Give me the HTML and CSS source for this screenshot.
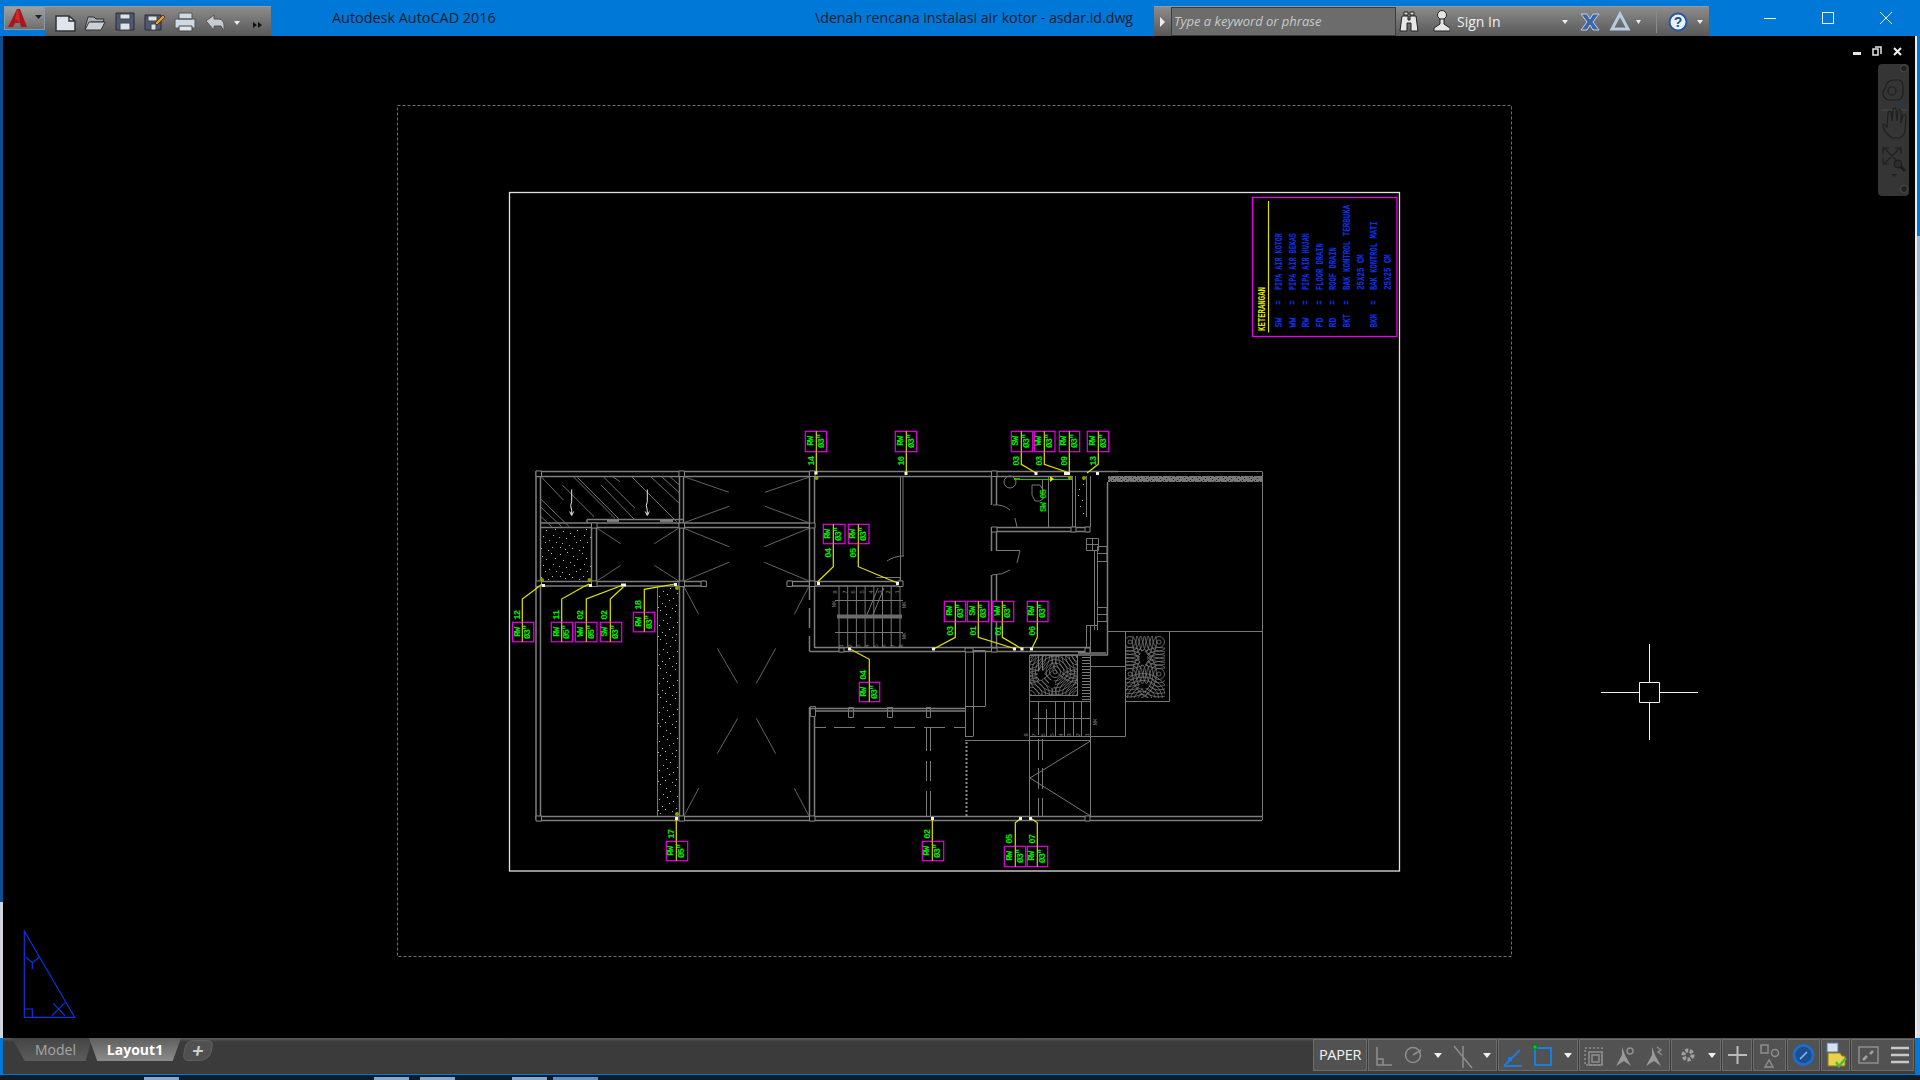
FILE: index.html
```html
<!DOCTYPE html>
<html lang="en">
<head>
<meta charset="utf-8">
<title>Autodesk AutoCAD 2016</title>
<link rel="stylesheet" href="styles.css">
</head>
<body>
<div class="window">
  <header class="titlebar">
    <div class="app-btn">
      <svg class="ico" width="40" height="24" viewBox="0 0 40 24">
        <path class="logo" d="M3 21 12 3h3l7 18h-6l-1-4h-5l-2 4z"/>
        <path class="logo-hi" d="M12 3l-2 10 5 4-1-12z"/>
        <path class="tri-dark" d="M30 9h7l-3.500 4z"/>
      </svg>
    </div>
    <div class="qat">
      <svg class="ico" width="226" height="30" viewBox="45 6 226 30">
        <path class="doc" d="M56 15h13l6 5v10H56z"/>
        <path class="doc-edge" d="M56 15h13l6 5v10H56zM69 15v5h6"/>
        <path class="folder" d="M85 27l3-11h6l2 2h8l-1 3h-12l-3 6z"/>
        <path class="folder2" d="M85 29l4-8h16l-4 8z"/>
        <path class="disk" d="M116 12h18v17h-18z"/>
        <path class="disk-hi" d="M120 13h10v5h-10zM120 22h10v7h-10z"/>
        <path class="disk" d="M145 14h16v15h-16z"/>
        <path class="disk-hi" d="M148 15h9v5h-9zM151 23h5v6h-5z"/>
        <path class="pen" d="M155 22l8-8 2 2-8 8z"/>
        <path class="print" d="M179 12h13v6h-13zM175 18h20v9h-20z"/>
        <path class="disk-hi" d="M179 25h13v5h-13z"/>
        <path class="undo" d="M206 20l8-6v4h5q5 1 5 6v6l-3-5h-7v4z"/>
        <path class="tri-white" d="M234 20h6l-3 4z"/>
        <path class="tri-black" d="M253 21l4 3-4 3zM258 21l4 3-4 3z"/>
      </svg>
    </div>
    <span class="app-name">Autodesk AutoCAD 2016</span>
    <span class="doc-name">\denah rencana instalasi air kotor - asdar.id.dwg</span>
    <div class="infocenter">
      <div class="expander"><span class="tri-r"></span></div>
      <div class="search">Type a keyword or phrase</div>
      <svg class="ico" width="54" height="29" viewBox="1396 6 54 29">
        <path class="bino" d="M1402 15h6v4h2v-4h6l2 15h-7v-8h-4v8h-7z"/>
        <path class="bino-dk" d="M1404 11h4v3h-4zM1410 11h4v3h-4z"/>
        <circle class="bino" cx="1442" cy="14" r="4.500"/>
        <path class="bino" d="M1440 18h4v5l6 4v3h-16v-3l6-4z"/>
      </svg>
      <span class="signin">Sign In</span>
      <svg class="ico" width="148" height="29" viewBox="1561 6 148 29">
        <path class="tri-white" d="M1562 19h6l-3 4z"/>
        <path class="x-ex" d="M1581 13h6l3 5 3-5h6l-6 8 6 8h-6l-3-5-3 5h-6l6-8z"/>
        <path class="a360" d="M1620 13l8 15h-16z"/>
        <path class="tri-white" d="M1636 19h5l-2.500 4z"/>
        <path class="sep" d="M1656.500 10v22"/>
        <circle class="help" cx="1678" cy="21" r="8.500"/>
        <text class="help-q" x="1678" y="26">?</text>
        <path class="tri-white" d="M1697 19h6l-3 4z"/>
      </svg>
    </div>
    <div class="winctl">
      <span class="min"></span>
      <span class="max"></span>
      <svg class="ico" width="14" height="14" viewBox="0 0 14 14"><path class="close" d="M1 1l12 12M13 1 1 13"/></svg>
    </div>
  </header>

  <main class="work">
    <div class="edge-left"></div>
    <div class="canvas">
      <svg class="drawing" width="1912" height="1002" viewBox="3 36 1912 1002">
        <defs>
          <pattern id="speck" width="31" height="29" patternUnits="userSpaceOnUse">
            <path class="speck" d="M2 3.500h1M9 1.500h1M15 5.500h1M24 2.500h1M28 7.500h1M5 9.500h1M12 11.500h1M19 8.500h1M26 13.500h1M1 15.500h1M8 16.500h1M16 14.500h1M22 18.500h1M29 20.500h1M4 21.500h1M11 23.500h1M18 20.500h1M25 25.500h1M7 27.500h1M14 26.500h1M21 28.500h1M2 25.500h1"/>
          </pattern>
          <pattern id="band" width="13" height="7" patternUnits="userSpaceOnUse">
            <rect class="band-bg" width="13" height="7"/>
            <path class="band-dot" d="M1 1.500h1M5 .500h1M9 2.500h1M3 3.500h1M7 4.500h1M11 5.500h1M1 6.500h1M5 5.500h1"/>
          </pattern>
          <g id="rings">
            <circle r="2"/><circle r="5.500"/><circle r="9"/><circle r="12.500"/><circle r="16"/><circle r="19.500"/><circle r="23"/><circle r="26.500"/>
          </g>
          <clipPath id="clip-a"><rect x="1029" y="655" width="49" height="41"/></clipPath>
          <clipPath id="clip-b"><rect x="1126" y="636" width="39" height="62"/></clipPath>
        </defs>

        <rect class="dash" x="397.500" y="105.500" width="1114" height="851"/>
        <rect class="paper" x="509.500" y="192.500" width="890" height="678.500"/>

        <rect class="speck-area" x="541" y="528" width="50" height="52"/>
        <rect class="speck-area" x="658" y="587" width="21" height="229"/>
        <rect class="speck-area" x="1077" y="479" width="9" height="37"/>
        <rect class="band-area" x="1108" y="476" width="155" height="6"/>

        <path class="wall" d="M536 471.500H1118M536 476.500H679M684 476.500H809M815 476.500H991M997 476.500H1072M536 471V820M540.500 477V816M541 523H809M541 527.500H809M587 519.500H683M587 519.500V523M536 581.500H706M536 586H706M787 581.500H903M787 586H903M679.500 471V820M683.500 471V820M809.500 471V586M814.500 471V586M591.500 527V582M596.500 527V582M536 816.500H1262M536 820.500H1262M809.500 586V600M809.500 608V628M809.500 636V651M814.500 586V648M809.500 651.500H1090M814.500 647.500H1090M991.500 476V505M996.500 476V505M991.500 527V551M996.500 527V551M991.500 575V648M996.500 575V648M997 527.500H1090M997 531.500H1090M810 708.500H965M815 711H965M809.500 707V816M814.500 717V816M1107.500 482V655M1030 655H1108M1078 653H1106"/>
        <path class="thin" d="M1118 471.500H1262M900.500 476V580M903 476V556M1048.500 476V527M1072.500 476V530M1075.500 476V530M1086.500 476V517M1090.500 476V527M1086.500 538.500H1098.500V550.500H1086.500zM1092.500 538V550M1086.500 544.500H1098.500M1094.500 550V630M1097.500 550V630M1097.500 546.500H1107V553.500H1097.500zM1097.500 553.500H1107V561.500H1097.500zM1097.500 607.500H1107V614.500H1097.500zM1097.500 614.500H1107V621.500H1097.500zM1086.500 625V652M1090.500 625V652M1086.500 625.500H1097M657.500 586V816M1262.500 471.500V820M1108 631.500H1262M1169.500 631.500V701.500M1126 701.500H1169.500M1125.500 631.500V736.500M1090 736.500H1125.500M1090 666.500H1125.500M1029.500 655V816M1090.500 655V816M1029.500 701.500H1090.500M1029.500 736.500H1090.500M965 740.500H1090.500M1090.500 741 1030 778 1090.500 816M965.500 650V736M973.500 650V736M985.500 652V706M965 706.500H985.500M965 736.500H973.500M965 650.500H985.500M1038.500 655V680M1042.500 655V680M1038.500 739V760M1042.500 739V760M1038.500 768V789M1042.500 768V789M1038.500 798V816M1042.500 798V816M1038.500 702V735M1046.500 709V736M1055.500 701.500V736.500M1064.500 701.500V736.500M1073.500 701.500V736.500M1081.500 701.500V736.500M1033 718.500H1090.500"/>
        <path class="thin" d="M848.500 707.500h5v10h-5zM887.500 707.500h5v10h-5zM926.500 707.500h4v10h-4zM810.500 706.500h5v10h-5zM815 727.500H826M834 727.500H855M864 727.500H885M894 727.500H915M924 727.500H945M954 727.500H965M926.500 728V751M930.500 728V751M926.500 761V781M930.500 761V781M926.500 791V816M930.500 791V816"/>
        <path class="dashed" d="M966.500 742V816"/>
        <path class="thin" d="M993 505Q1003 504 1010 510M1015 518l2 9M997 550.500H1020M1020 551l-3 12M1010 570Q1002 575 992 575M887 561Q894 556 904 556M876.500 577.500H900V581M1010 482m-6 0a6 6 0 1 0 12 0a6 6 0 1 0-12 0M1032 485h8l3 5v9q-3 3-8 2l-3-6zM1042.500 480v14"/>
        <path class="diag" d="M684 476.700 729 492.300M808.700 477.300 765 492.300M684 522.700 729 506.300M809 522.700 765 506.300M684 528.300 729 546.700M809 528.300 764.300 546.700M684 581 729 562.300M809 581 764.300 562.300M597.300 528.300 620.700 543.700M678.300 528.300 654.300 543.700M597.300 580.700 620.700 565.300M678.300 580.700 654.300 565.300M684 586.700 698.700 614.300M808.700 586.700 794.300 614.300M717.300 648.300 737.700 683.300M775.700 648.300 756.300 683.300M737.700 718.300 717.300 753.700M756.300 718.300 775.700 753.700M698.700 788.300 684 816M794.300 788.300 809 816"/>
        <path class="hatch" d="M541.700 477.300 563.300 500M562.300 485 594 516.700M573.300 476.700 615 518.300M577.300 477.300 620 520M603.300 476.700 635 508.300M601 485 635 520M612.700 476.700 620 481.700M631.700 476.700 676.700 521.700M650.700 476.700 679.300 503.300M661.700 476.700 679.300 492.700M670 476.700 679.300 485M541 499.300 569.300 526.700M541 507.300 561.700 526.700M541 516.700 551.700 526.700"/>
        <path class="white-line" d="M571.700 489.500v12l-1 4 1 5v4m-2-3 2 4 2-4M647.300 489.500v12l-1 4 1 5v4m-2-3 2 4 2-4M607 521h12M660 521h13"/>
        <path class="cols" d="M536 471h5.500v5.500H536zM679 471h5.500v5.500H679zM809.500 471h5.500v5.500h-5.500zM991.500 471h5.500v5.500h-5.500zM591.500 523h5.500v5h-5.500zM679 523h5.500v5h-5.500zM809.500 523h5.500v5h-5.500zM536 581h5.500v5.500H536zM591.500 581h5.500v5.500h-5.500zM679 581h5.500v5.500H679zM701 581h5.500v5.500H701zM787 581h5.500v5.500H787zM809.500 581h5.500v5.500h-5.500zM898 581h5v5.500h-5zM991.500 527h5.500v5h-5.500zM1071 527h5v5h-5zM1085 527h5v5h-5zM536 816h5.500v5H536zM679 816h5.500v5H679zM809.500 816h5.500v5h-5.500zM1085 816h5v5h-5zM1085 648h5v5h-5zM839 648h5v4h-5zM965 648h8v4h-8zM991.500 648h5.500v4h-5.500z"/>

        <g class="rings" clip-path="url(#clip-a)">
          <use href="#rings" x="1055" y="672"/><use href="#rings" x="1030" y="656"/><use href="#rings" x="1078" y="656"/><use href="#rings" x="1030" y="696"/><use href="#rings" x="1078" y="696"/>
        </g>
        <g class="rings" clip-path="url(#clip-b)">
          <use href="#rings" x="1159" y="674"/><use href="#rings" x="1130" y="674"/><use href="#rings" x="1159" y="642"/><use href="#rings" x="1130" y="642"/><use href="#rings" x="1143" y="700"/>
        </g>
        <ellipse class="blob" cx="1041" cy="675" rx="3.500" ry="5"/>
        <ellipse class="blob" cx="1052" cy="684" rx="3" ry="4"/>
        <ellipse class="blob" cx="1143.500" cy="658" rx="4" ry="7"/>
        <ellipse class="blob" cx="1144" cy="686" rx="5" ry="2.500"/>
        <rect class="cad-line" x="1029.500" y="655.500" width="48" height="40"/>
        <path class="treads" d="M1082 657.500h8M1082 660.500h8M1082 663.500h8M1082 666.500h8M1082 669.500h8M1082 672.500h8M1082 675.500h8M1082 678.500h8M1082 681.500h8M1082 684.500h8M1082 687.500h8M1082 690.500h8M1082 693.500h8M1082 696.500h8M1082 699.500h8"/>

        <path class="thin" d="M839 586V648M847.700 586V648M856.400 586V648M865.100 586V648M873.800 586V648M882.500 586V648M891.200 586V648M900 586V648M835 600.500H903M835 632.500H903M878 588 866 617M884 588 872 617"/>
        <path class="tread-bar" d="M837 616.500H902"/>
        <g class="cad-num">
          <text transform="translate(843,646) rotate(-90)">1</text><text transform="translate(852,646) rotate(-90)">2</text><text transform="translate(860,646) rotate(-90)">3</text><text transform="translate(869,646) rotate(-90)">4</text><text transform="translate(878,646) rotate(-90)">5</text><text transform="translate(886,646) rotate(-90)">6</text><text transform="translate(895,646) rotate(-90)">7</text><text transform="translate(903,646) rotate(-90)">8</text>
          <text transform="translate(837,592) rotate(-90)">8</text><text transform="translate(847,592) rotate(-90)">7</text><text transform="translate(855,592) rotate(-90)">6</text><text transform="translate(864,592) rotate(-90)">5</text><text transform="translate(873,592) rotate(-90)">4</text><text transform="translate(882,592) rotate(-90)">3</text><text transform="translate(890,592) rotate(-90)">2</text><text transform="translate(899,592) rotate(-90)">1</text>
          <text transform="translate(1089,735) rotate(-90)">1</text><text transform="translate(1080,735) rotate(-90)">2</text><text transform="translate(1071,735) rotate(-90)">3</text><text transform="translate(1063,735) rotate(-90)">4</text><text transform="translate(1054,735) rotate(-90)">5</text><text transform="translate(1045,735) rotate(-90)">6</text><text transform="translate(1036,735) rotate(-90)">7</text><text transform="translate(1028,735) rotate(-90)">8</text>
          <text transform="translate(1097,722) rotate(-90)">NK</text>
          <text transform="translate(906,605) rotate(-90)">NK</text>
          <text transform="translate(836,604) rotate(-90)">NK</text>
          <text transform="translate(906,636) rotate(-90)">NK</text>
        </g>

        <path class="leader" d="M522.300 622V599L535.700 589 542 584M561.700 622V599L583 587 589 584M586.300 622V599L623 585M610.300 622V599L623.300 587M644.300 612V589.300L675 584M816.300 452V473M906.300 452V473M1021.300 452V464.300L1036 473M1044.300 452V464.300L1066.700 472M1069.300 452V473M1098.300 452V464.300L1087 473M833.300 544V566.700L817.700 581.700M858.300 544V566.700L888.300 579.300 898 583M955.300 622V637.300L934 648.700M978.300 622V637.300L1015 648.700M1002.300 622V637.300L1021.700 648.700M1037.300 622V637.300L1031.700 648.700M869.300 682V659.300L850 649M676.300 841V819M932.300 841V819M1015.300 846V822.700L1020 819M1037.300 846V822.700L1032 819M1014 479H1020"/>
        <path class="green-line" d="M1014 479.500H1072"/>
        <path class="tri-y" d="M1050 476v6l4-3z"/>
        <text class="lbl" transform="translate(1046,501) rotate(-90)">SW 05</text>
        <path class="nodes" d="M814.500 471.500h3v3h-3zM904.500 472h3v3h-3zM1034.500 472h3v3h-3zM1064 472h6v3h-6zM1096 472h3v3h-3zM621 583.500h5v3h-5zM817 582h3v3h-3zM896 582h3v3h-3zM542 584h3v3h-3zM589 584h3v3h-3zM674 583h3v3h-3zM932 647.500h3v3h-3zM1013 647.500h3v3h-3zM1020.500 647.500h3v3h-3zM1030 647.500h3v3h-3zM848 647.500h3v3h-3zM675 817h3v3h-3zM931 817h3v3h-3zM1019 817h3v3h-3zM1029 817h3v3h-3z"/>
        <circle class="olive" cx="542" cy="580" r="2"/><circle class="olive" cx="589.500" cy="580" r="2"/><circle class="olive" cx="677" cy="588" r="2"/><circle class="olive" cx="816.500" cy="478" r="2"/><circle class="olive" cx="1070" cy="478" r="2"/><circle class="olive" cx="1084" cy="478" r="2"/><circle class="olive" cx="677" cy="814" r="2"/>

        <g class="tag" transform="translate(512.500,622.300)"><rect width="21.300" height="19.500"/><path d="M9.800 0V19.500"/><text transform="translate(5,10) rotate(-90)">RW</text><text transform="translate(15.500,10) rotate(-90)">Ø3"</text><text transform="translate(5,-7) rotate(-90)">12</text></g>
        <g class="tag" transform="translate(551.300,622.300)"><rect width="21.300" height="19.500"/><path d="M10.400 0V19.500"/><text transform="translate(5.500,10) rotate(-90)">RW</text><text transform="translate(16,10) rotate(-90)">Ø5"</text><text transform="translate(6,-7) rotate(-90)">11</text></g>
        <g class="tag" transform="translate(575.300,622.300)"><rect width="21.700" height="19.500"/><path d="M11 0V19.500"/><text transform="translate(6,10) rotate(-90)">WW</text><text transform="translate(16.500,10) rotate(-90)">Ø5"</text><text transform="translate(6,-7) rotate(-90)">02</text></g>
        <g class="tag" transform="translate(600.300,622.300)"><rect width="21.400" height="19.500"/><path d="M10 0V19.500"/><text transform="translate(5,10) rotate(-90)">SW</text><text transform="translate(15.500,10) rotate(-90)">Ø3"</text><text transform="translate(5,-7) rotate(-90)">02</text></g>
        <g class="tag" transform="translate(633.300,612.300)"><rect width="21.400" height="19.500"/><path d="M11 0V19.500"/><text transform="translate(6,10) rotate(-90)">RW</text><text transform="translate(16.500,10) rotate(-90)">Ø3"</text><text transform="translate(6,-7) rotate(-90)">18</text></g>
        <g class="tag" transform="translate(805.300,431.300)"><rect width="21.300" height="20.400"/><path d="M11 0V20.400"/><text transform="translate(6,10) rotate(-90)">RW</text><text transform="translate(16.500,10) rotate(-90)">Ø3"</text><text transform="translate(7,30) rotate(-90)">14</text></g>
        <g class="tag" transform="translate(895.300,431.300)"><rect width="21.400" height="20.400"/><path d="M11 0V20.400"/><text transform="translate(6,10) rotate(-90)">RW</text><text transform="translate(16.500,10) rotate(-90)">Ø3"</text><text transform="translate(7,30) rotate(-90)">10</text></g>
        <g class="tag" transform="translate(1011.300,431.300)"><rect width="21.400" height="20.400"/><path d="M10 0V20.400"/><text transform="translate(5,10) rotate(-90)">SW</text><text transform="translate(15.500,10) rotate(-90)">Ø3"</text><text transform="translate(6,30) rotate(-90)">03</text></g>
        <g class="tag" transform="translate(1034.300,431.300)"><rect width="20.700" height="20.400"/><path d="M10 0V20.400"/><text transform="translate(5,10) rotate(-90)">WW</text><text transform="translate(15.500,10) rotate(-90)">Ø3"</text><text transform="translate(6,30) rotate(-90)">03</text></g>
        <g class="tag" transform="translate(1059.300,431.300)"><rect width="20.400" height="20.400"/><path d="M10 0V20.400"/><text transform="translate(5,10) rotate(-90)">RW</text><text transform="translate(15.500,10) rotate(-90)">Ø3"</text><text transform="translate(6,30) rotate(-90)">09</text></g>
        <g class="tag" transform="translate(1087.300,431.300)"><rect width="21.400" height="20.400"/><path d="M11 0V20.400"/><text transform="translate(6,10) rotate(-90)">RW</text><text transform="translate(16.500,10) rotate(-90)">Ø3"</text><text transform="translate(7,30) rotate(-90)">13</text></g>
        <g class="tag" transform="translate(823.300,524.300)"><rect width="21.700" height="19.400"/><path d="M10 0V19.400"/><text transform="translate(5,10) rotate(-90)">RW</text><text transform="translate(16,10) rotate(-90)">Ø3"</text><text transform="translate(6,29) rotate(-90)">04</text></g>
        <g class="tag" transform="translate(848.300,524.300)"><rect width="20.700" height="19.400"/><path d="M10 0V19.400"/><text transform="translate(5,10) rotate(-90)">RW</text><text transform="translate(15.500,10) rotate(-90)">Ø3"</text><text transform="translate(6,29) rotate(-90)">05</text></g>
        <g class="tag" transform="translate(944.300,601.300)"><rect width="21.400" height="20.400"/><path d="M11 0V20.400"/><text transform="translate(6,10) rotate(-90)">RW</text><text transform="translate(16.500,10) rotate(-90)">Ø3"</text><text transform="translate(7,30) rotate(-90)">03</text></g>
        <g class="tag" transform="translate(967.300,601.300)"><rect width="21.400" height="20.400"/><path d="M11 0V20.400"/><text transform="translate(6,10) rotate(-90)">SW</text><text transform="translate(16.500,10) rotate(-90)">Ø3"</text><text transform="translate(7,30) rotate(-90)">01</text></g>
        <g class="tag" transform="translate(992.700,601.300)"><rect width="21" height="20.400"/><path d="M9.600 0V20.400"/><text transform="translate(5,10) rotate(-90)">WW</text><text transform="translate(15.500,10) rotate(-90)">Ø3"</text><text transform="translate(6,30) rotate(-90)">01</text></g>
        <g class="tag" transform="translate(1027.300,601.300)"><rect width="20.700" height="20.400"/><path d="M10 0V20.400"/><text transform="translate(5,10) rotate(-90)">RW</text><text transform="translate(15.500,10) rotate(-90)">Ø3"</text><text transform="translate(6,30) rotate(-90)">06</text></g>
        <g class="tag" transform="translate(859.300,682.300)"><rect width="20.400" height="19.400"/><path d="M10 0V19.400"/><text transform="translate(5,10) rotate(-90)">RW</text><text transform="translate(15.500,10) rotate(-90)">Ø3"</text><text transform="translate(5,-7) rotate(-90)">04</text></g>
        <g class="tag" transform="translate(666.300,841.300)"><rect width="21.400" height="19.400"/><path d="M10 0V19.400"/><text transform="translate(5,10) rotate(-90)">RW</text><text transform="translate(15.500,10) rotate(-90)">Ø5"</text><text transform="translate(6,-7) rotate(-90)">17</text></g>
        <g class="tag" transform="translate(922.300,841.300)"><rect width="21.400" height="19.400"/><path d="M10 0V19.400"/><text transform="translate(5,10) rotate(-90)">RW</text><text transform="translate(15.500,10) rotate(-90)">Ø3"</text><text transform="translate(6,-7) rotate(-90)">02</text></g>
        <g class="tag" transform="translate(1004.300,846.300)"><rect width="21.400" height="20.400"/><path d="M11 0V20.400"/><text transform="translate(6,10) rotate(-90)">RW</text><text transform="translate(16.500,10) rotate(-90)">Ø3"</text><text transform="translate(6,-7) rotate(-90)">05</text></g>
        <g class="tag" transform="translate(1027.300,846.300)"><rect width="20.400" height="20.400"/><path d="M10 0V20.400"/><text transform="translate(5,10) rotate(-90)">RW</text><text transform="translate(15.500,10) rotate(-90)">Ø3"</text><text transform="translate(6,-7) rotate(-90)">07</text></g>

        <rect class="legend-box" x="1252.500" y="197.500" width="144.500" height="139"/>
        <path class="legend-rule" d="M1268.500 201V332.500"/>
        <text class="legend-head" transform="translate(1264.500,331) rotate(-90) scale(.667,1)">KETERANGAN</text>
        <g class="legend">
          <text transform="translate(1282.300,327.500) rotate(-90) scale(.75,1)">SW</text><text transform="translate(1282.300,305) rotate(-90) scale(.7,1)">=</text><text transform="translate(1282.300,290) rotate(-90) scale(.617,1)">PIPA AIR KOTOR</text>
          <text transform="translate(1296,327.500) rotate(-90) scale(.75,1)">WW</text><text transform="translate(1296,305) rotate(-90) scale(.7,1)">=</text><text transform="translate(1296,290) rotate(-90) scale(.617,1)">PIPA AIR BEKAS</text>
          <text transform="translate(1309,327.500) rotate(-90) scale(.75,1)">RW</text><text transform="translate(1309,305) rotate(-90) scale(.7,1)">=</text><text transform="translate(1309,290) rotate(-90) scale(.617,1)">PIPA AIR HUJAN</text>
          <text transform="translate(1322.700,327.500) rotate(-90) scale(.75,1)">FD</text><text transform="translate(1322.700,305) rotate(-90) scale(.7,1)">=</text><text transform="translate(1322.700,290) rotate(-90) scale(.645,1)">FLOOR DRAIN</text>
          <text transform="translate(1336.300,327.500) rotate(-90) scale(.75,1)">RD</text><text transform="translate(1336.300,305) rotate(-90) scale(.7,1)">=</text><text transform="translate(1336.300,290) rotate(-90) scale(.65,1)">ROOF DRAIN</text>
          <text transform="translate(1350,327.500) rotate(-90) scale(.68,1)">BKT</text><text transform="translate(1350,305) rotate(-90) scale(.7,1)">=</text><text transform="translate(1350,290) rotate(-90) scale(.68,1)">BAK KONTROL TERBUKA</text>
          <text transform="translate(1363.700,290) rotate(-90) scale(.68,1)">25X25 CM</text>
          <text transform="translate(1377.300,327.500) rotate(-90) scale(.68,1)">BKM</text><text transform="translate(1377.300,305) rotate(-90) scale(.7,1)">=</text><text transform="translate(1377.300,290) rotate(-90) scale(.65,1)">BAK KONTROL MATI</text>
          <text transform="translate(1390.700,290) rotate(-90) scale(.68,1)">25X25 CM</text>
        </g>

        <path class="ucs" d="M24.300 931 74.700 1017.300H24.300zM24.300 1009H32.300V1017.300M26 957.300 32.300 962.700 39.300 957.300M32.300 962.700V969.300M52 1015.700 65 1002.700M53.300 1003.300 65 1015.700"/>
        <path class="crosshair" d="M1649.500 644V682M1649.500 702V740M1601 692.500H1639M1660 692.500H1698M1639.500 682.500h20v20h-20z"/>
      </svg>

      <div class="vp-ctl">
        <span class="vp-min"></span>
        <svg class="ico" width="10" height="10" viewBox="0 0 10 10"><path class="vp-rest" d="M3 1h6v7M1 3h5v6H1z"/></svg>
        <svg class="ico" width="9" height="9" viewBox="0 0 9 9"><path class="vp-x" d="M1 1l7 7M8 1 1 8"/></svg>
      </div>

      <aside class="navbar">
        <svg class="ico" width="31" height="132" viewBox="0 0 31 132">
          <circle class="nav-x" cx="26" cy="4.500" r="3.500"/>
          <path class="nav-stroke" d="M8 22a7 7 0 0 1 7-6h6q4 1 4 6v8a6 6 0 0 1-6 6h-8q-6-1-6-8z"/>
          <circle class="nav-stroke" cx="14" cy="27" r="4"/>
          <text class="nav-2d" x="16" y="43">2D</text>
          <path class="nav-sep" d="M3 46H29"/>
          <path class="nav-stroke" d="M6 66q5 6 8 8h8q5-3 5-8l1-13q0-3-3-2l-2 8 0-12q-2-3-3 0l-1 10-1-12q-2-2-3 1l-1 11-1-9q-2-2-3 1l-1 14-3-3q-2 0-1 2z"/>
          <path class="nav-stroke" d="M6 84l16 16M22 84 6 100M5 90v-6h6M17 84h6v6M5 94v6h6"/>
          <circle class="nav-fill" cx="20" cy="100" r="4"/>
          <path class="nav-handle" d="M23 103l4 4"/>
          <path class="nav-tri" d="M13 110h6l-3 3z"/>
          <circle class="nav-x" cx="26" cy="125" r="3.500"/>
        </svg>
      </aside>
    </div>
    <div class="edge-right"></div>
  </main>

  <footer class="statusbar">
    <nav class="tabs">
      <div class="tab tab-model">Model</div>
      <div class="tab tab-layout">Layout1</div>
      <div class="tab-add">+</div>
    </nav>
    <div class="status-tools">
      <div class="sbox sbox-paper">PAPER</div>
      <div class="sbox sbox-b">
        <svg class="ico" width="127" height="30" viewBox="1369 1040 127 30">
          <path class="st" d="M1377 1047v18h15M1377 1059h6v6"/>
          <circle class="st" cx="1413" cy="1055" r="7.500"/><path class="st" d="M1413 1055l8-5"/>
          <path class="st-tri" d="M1434 1053h8l-4 5z"/>
          <path class="st" d="M1454 1046l18 22M1463 1046v22"/>
          <path class="st-tri" d="M1483 1053h8l-4 5z"/>
        </svg>
      </div>
      <div class="sbox sbox-c">
        <svg class="ico" width="78" height="30" viewBox="1499 1040 78 30">
          <path class="st-blue" d="M1504 1066l16-16M1504 1066h18"/><rect class="st-blue-fill" x="1508" y="1057" width="4" height="4"/>
          <rect class="st-blue" x="1535" y="1048" width="16" height="17"/><rect class="st-green" x="1533" y="1045" width="4" height="4"/>
          <path class="st-tri" d="M1564 1053h8l-4 5z"/>
        </svg>
      </div>
      <div class="sbox sbox-d">
        <svg class="ico" width="89" height="30" viewBox="1580 1040 89 30">
          <path class="st-dash" d="M1585 1048h17v17h-17z"/><rect class="st" x="1589" y="1052" width="13" height="13"/><rect class="st" x="1592" y="1055" width="7" height="7"/>
          <path class="st-fill" d="M1616 1066l6-11 0-8 3 8 6 11-7-5z"/><circle class="st" cx="1630" cy="1051" r="3"/>
          <path class="st-fill" d="M1646 1066l6-11 0-8 3 8 6 11-7-5z"/><path class="st" d="M1657 1047l4 3-3 2 4 3"/>
        </svg>
      </div>
      <div class="sbox sbox-e">
        <svg class="ico" width="48" height="30" viewBox="1672 1040 48 30">
          <circle class="st-gear" cx="1688" cy="1055" r="4.500"/>
          <path class="st-tri" d="M1708 1053h8l-4 5z"/>
        </svg>
      </div>
      <div class="sbox sbox-f">
        <svg class="ico" width="28" height="30" viewBox="1723 1040 28 30"><path class="st-plus" d="M1737.500 1046v18M1728 1055h19"/></svg>
      </div>
      <div class="sbox sbox-g">
        <svg class="ico" width="31" height="30" viewBox="1754 1040 31 30">
          <rect class="st" x="1761" y="1045" width="7" height="8"/><circle class="st" cx="1775" cy="1053" r="3.500"/><path class="st" d="M1765 1067l4-7 4 7z"/>
        </svg>
      </div>
      <div class="sbox sbox-h">
        <svg class="ico" width="31" height="30" viewBox="1788 1040 31 30">
          <circle class="st-globe" cx="1803.500" cy="1055" r="9.500"/><path class="st-blue-thin" d="M1800 1059l7-7"/>
        </svg>
      </div>
      <div class="sbox sbox-i">
        <svg class="ico" width="27" height="30" viewBox="1822 1040 27 30">
          <rect class="st-white" x="1827" y="1043" width="11" height="9"/>
          <path class="st-yellow" d="M1828 1053h12l2 3h3v10h-17z"/>
          <path class="st-check" d="M1836 1062l3 4 7-8"/>
        </svg>
      </div>
      <div class="sbox sbox-j">
        <svg class="ico" width="61" height="30" viewBox="1852 1040 61 30">
          <rect class="st" x="1859" y="1047" width="19" height="16"/><path class="st-thick" d="M1863 1060l4-4M1873 1051l-3 3"/>
          <path class="st-menu" d="M1891 1048h18M1891 1055h18M1891 1062h18"/>
        </svg>
      </div>
    </div>
  </footer>

  <div class="taskstrip">
    <span class="task t1"></span><span class="task t2"></span><span class="task t3"></span><span class="task t4"></span><span class="task t5"></span>
  </div>
</div>
</body>
</html>
```

FILE: styles.css
```css
* { box-sizing: border-box; }
html, body { margin: 0; height: 100%; overflow: hidden; background: #000; }
.window { width: 1920px; height: 1080px; display: flex; flex-direction: column; font-family: "Open Sans", "Noto Sans", sans-serif; }
.ico { display: block; flex: none; }

/* title bar */
.titlebar { height: 36px; flex: none; background: #0078d7; display: flex; align-items: flex-start; padding: 6px 0 0 4px; position: relative; }
.app-btn { width: 41px; height: 24px; background: linear-gradient(#a0a0a0, #6f6f6f); border: 1px solid #8a9aa8; flex: none; overflow: hidden; }
.app-btn .ico { margin: -1px 0 0 0; }
.qat { width: 226px; height: 30px; flex: none; background: linear-gradient(#8b8b8b, #585858); border-top: 1px solid #9a9a9a; }
.app-name { margin: 1px 0 0 61px; color: #10202e; font-size: 14.400px; line-height: 22px; white-space: nowrap; flex: none; }
.doc-name { color: #10202e; font-size: 14.200px; line-height: 22px; white-space: nowrap; position: absolute; left: 815px; top: 7px; }
.infocenter { position: absolute; left: 1154px; top: 6px; width: 555px; height: 30px; display: flex; background: linear-gradient(#8b8b8b, #585858); border-top: 1px solid #9a9a9a; }
.expander { width: 17px; display: flex; align-items: center; justify-content: center; }
.tri-r { width: 0; height: 0; border-left: 5px solid #eee; border-top: 5px solid transparent; border-bottom: 5px solid transparent; }
.search { width: 225px; height: 29px; background: #6c6c6c; border: 1px solid #3c3c3c; color: #c9c9c9; font-style: italic; font-size: 13px; line-height: 26px; padding-left: 2px; white-space: nowrap; overflow: hidden; flex: none; }
.signin { width: 111px; flex: none; color: #eee; font-size: 14px; line-height: 30px; padding-left: 7px; }
.winctl { position: absolute; right: 0; top: 0; height: 36px; width: 180px; display: flex; align-items: center; justify-content: space-between; padding: 0 27px 0 24px; }
.min { width: 12px; height: 1px; background: #e8f1fa; }
.max { width: 12px; height: 12px; border: 1px solid #e8f1fa; }
.close { stroke: #e8f1fa; stroke-width: 1; fill: none; }

.logo { fill: #a8171c; }
.logo-hi { fill: #cc2a2a; }
.tri-dark { fill: #222; }
.tri-white { fill: #eee; }
.tri-black { fill: #111; }
.doc { fill: #dfe5ec; }
.doc-edge { fill: none; stroke: #333; stroke-width: 1.500; }
.folder { fill: #a8b0b8; stroke: #333; }
.folder2 { fill: #c8d0d8; stroke: #333; }
.disk { fill: #4a5a74; stroke: #2b2b2b; }
.disk-hi { fill: #dde3ea; stroke: #444; }
.pen { fill: #d9a32c; stroke: #7b2c12; }
.print { fill: #cfdbe4; stroke: #555; }
.undo { fill: #c4ccd2; stroke: #555; }
.bino { fill: #e6e6e6; stroke: #222; }
.bino-dk { fill: #ddd; stroke: #222; }
.x-ex { fill: #3d66a8; stroke: #c2d1e6; }
.a360 { fill: none; stroke: #b8cbe4; stroke-width: 3; }
.sep { stroke: #8b8b8b; }
.help { fill: #e8f0fa; stroke: #27579f; stroke-width: 2; }
.help-q { fill: #1c4f9c; font: bold 14px "Liberation Sans", sans-serif; text-anchor: middle; }

/* work area */
.work { height: 1002px; flex: none; display: flex; }
.edge-left { width: 3px; flex: none; background: linear-gradient(#0b4f90 0, #0b4f90 86.400%, #cfd6dc 86.400%, #cfd6dc 100%); }
.edge-right { width: 5px; flex: none; border-left: 2px solid #e8eef4; background: linear-gradient(#0078d7 0, #0078d7 20%, #9fb8d0 20%, #d8dee4 100%); }
.canvas { flex: 1; position: relative; background: #000; overflow: hidden; }
.drawing { display: block; }
.vp-ctl { position: absolute; top: 10px; right: 13px; display: flex; align-items: center; gap: 11px; }
.vp-min { width: 8px; height: 3px; background: #e6e6e6; margin-top: 4px; }
.vp-rest { fill: none; stroke: #e6e6e6; stroke-width: 1.500; }
.vp-x { fill: none; stroke: #f0f0f0; stroke-width: 2; }
.navbar { position: absolute; left: 1875px; top: 28px; width: 31px; height: 132px; background: #353535; border-radius: 4px; }
.nav-x { fill: #222; stroke: #4c4c4c; }
.nav-stroke { fill: none; stroke: #1f1f1f; stroke-width: 1.200; }
.nav-fill { fill: #2c2c2c; stroke: #1b1b1b; }
.nav-handle { stroke: #1b1b1b; stroke-width: 2.500; }
.nav-tri { fill: #202020; }
.nav-sep { stroke: #4a4a4a; }
.nav-2d { fill: #25374d; font: 9px "Liberation Sans", sans-serif; }

/* drawing */
.dash { fill: none; stroke: #707070; stroke-width: 1; stroke-dasharray: 3 2; }
.paper { fill: #000; stroke: #e0e0e0; stroke-width: 1.300; }
.speck { stroke: #bdbdbd; stroke-width: 1; }
.speck-area { fill: url(#speck); }
.band-area { fill: url(#band); }
.band-bg { fill: #777; }
.band-dot { stroke: #222; stroke-width: 1; }
.wall { fill: none; stroke: #7d7d7d; stroke-width: 1.500; }
.thin { fill: none; stroke: #777; stroke-width: 1; }
.dashed { fill: none; stroke: #8a8a8a; stroke-width: 2; stroke-dasharray: 2 2; }
.diag { fill: none; stroke: #636363; stroke-width: 1; }
.hatch { fill: none; stroke: #6f6f6f; stroke-width: 1; }
.white-line { fill: none; stroke: #e8e8e8; stroke-width: 1; }
.cols { fill: #000; stroke: #858585; stroke-width: 1; }
.rings { fill: none; stroke: #7a7a7a; stroke-width: .800; }
.blob { fill: #000; }
.cad-line { fill: none; stroke: #777; }
.treads { stroke: #7a7a7a; stroke-width: 1; }
.tread-bar { stroke: #6c6c6c; stroke-width: 4; }
.cad-num text { fill: #808080; font: 6px "Liberation Mono", monospace; text-anchor: middle; }
.leader { fill: none; stroke: #e3e300; stroke-width: 1.200; }
.green-line { stroke: #00d000; stroke-width: 1; }
.tri-y { fill: #e3e300; }
.lbl { fill: #00e000; font: bold 9px "Liberation Mono", monospace; letter-spacing: -1px; text-anchor: middle; }
.nodes { fill: #f2f2f2; }
.olive { fill: #8ea000; }
.tag rect { fill: #000; stroke: #e800e8; stroke-width: 1.200; }
.tag path { stroke: #e3e300; stroke-width: 1.100; }
.tag text { fill: #00f000; font: bold 9px "Liberation Mono", monospace; letter-spacing: -1px; text-anchor: middle; dominant-baseline: central; }
.legend-box { fill: none; stroke: #e800e8; stroke-width: 1.300; }
.legend-rule { stroke: #e3e300; stroke-width: 1.200; }
.legend-head { fill: #e3e300; font: bold 11px "Liberation Mono", monospace; }
.legend text { fill: #1030e8; font: bold 11px "Liberation Mono", monospace; }
.ucs { fill: none; stroke: #0a35e6; stroke-width: 1.200; }
.crosshair { fill: none; stroke: #f0f0f0; stroke-width: 1; }

/* status bar */
.statusbar { height: 37px; flex: none; background: linear-gradient(#5a5a5a 0, #3b3b3b 4px, #3b3b3b 100%); border-bottom: 1px solid #0078d7; border-left: 3px solid #0078d7; border-right: 5px solid #0078d7; display: flex; justify-content: space-between; }
.tabs { display: flex; align-items: flex-start; padding-left: 9px; }
.tab { height: 23px; font-size: 14px; line-height: 23px; text-align: center; flex: none; }
.tab-model { width: 80px; color: #a6a6a6; background: linear-gradient(#444, #5d5d5d); clip-path: polygon(0 0, 100% 0, 92% 100%, 16% 100%); padding-left: 7px; }
.tab-layout { width: 92px; margin-left: -3px; color: #fff; font-weight: 700; background: linear-gradient(#5f5f5f, #8c8c8c); clip-path: polygon(0 0, 100% 0, 91% 100%, 9% 100%); }
.tab-add { width: 28px; height: 21px; margin: 2px 0 0 3px; color: #cfcfcf; font-size: 20px; font-weight: 700; line-height: 20px; text-align: center; background: #505050; border: 1px solid #5e5e5e; border-radius: 8px 6px 10px 6px; transform: skewX(-10deg); }
.status-tools { display: flex; gap: 1px; margin: 1px 1px 3px 0; height: 32px; }
.sbox { height: 32px; background: #525252; border: 1px solid #6c6c6c; flex: none; overflow: hidden; }
.sbox-paper { width: 54px; color: #f2f2f2; font-size: 14.500px; line-height: 30px; text-align: center; letter-spacing: -.3px; }
.sbox-b { width: 129px; } .sbox-c { width: 80px; } .sbox-d { width: 91px; } .sbox-e { width: 50px; } .sbox-f { width: 30px; } .sbox-g { width: 33px; } .sbox-h { width: 33px; } .sbox-i { width: 29px; } .sbox-j { width: 63px; }
.st { fill: none; stroke: #8e8e8e; stroke-width: 1.500; }
.st-tri { fill: #f0f0f0; }
.st-blue { fill: none; stroke: #1a7de0; stroke-width: 2; }
.st-blue-fill { fill: #1a7de0; }
.st-green { fill: #12c912; stroke: #073; }
.st-dash { fill: none; stroke: #8e8e8e; stroke-width: 1.500; stroke-dasharray: 2 2; }
.st-fill { fill: #9a9a9a; }
.st-gear { fill: none; stroke: #a0a0a0; stroke-width: 4; stroke-dasharray: 3 1.500; }
.st-plus { stroke: #bcbcbc; stroke-width: 2; }
.st-globe { fill: #1b4f8f; stroke: #1a6fd0; stroke-width: 2.500; }
.st-blue-thin { stroke: #8cc0ff; stroke-width: 1.500; }
.st-white { fill: #d6e2ee; stroke: #5b76a8; }
.st-yellow { fill: #e8d24a; stroke: #8c7a1e; }
.st-check { fill: none; stroke: #53b53a; stroke-width: 2.500; }
.st-thick { stroke: #a0a0a0; stroke-width: 2.500; }
.st-menu { stroke: #c8c8c8; stroke-width: 2.500; }

/* taskbar sliver */
.taskstrip { height: 5px; flex: none; background: #0c1c28; display: flex; align-items: flex-end; }
.task { height: 3px; background: #85a9cb; flex: none; }
.t1 { width: 35px; margin-left: 144px; }
.t2 { width: 35px; margin-left: 195px; }
.t3 { width: 35px; margin-left: 11px; }
.t4 { width: 35px; margin-left: 57px; }
.t5 { width: 45px; margin-left: 6px; background: #5f92c4; }
```
